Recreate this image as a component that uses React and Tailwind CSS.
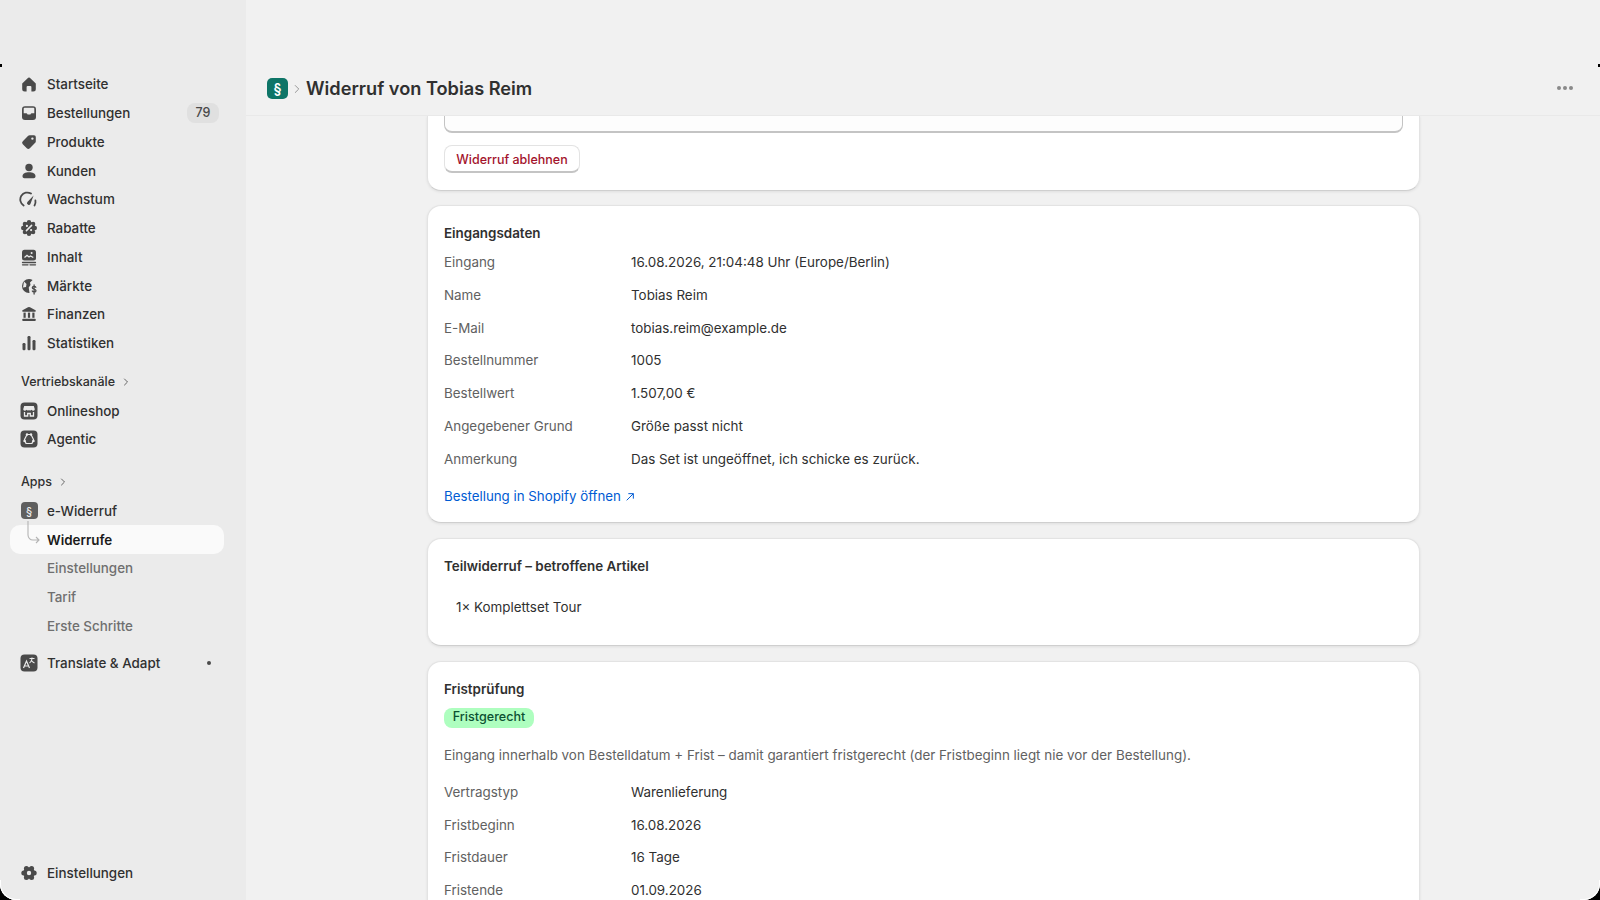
import { ChevronRight } from 'lucide-react'

const DARK = '#4a4a4a'
const SIDE = '#ebebeb'

const Ico = ({ children }) => (
  <svg viewBox="0 0 20 20" className="w-5 h-5 shrink-0" fill={DARK}>{children}</svg>
)

const Lobes = ({ n, r, lobe, core }) => (
  <>
    <circle cx="10" cy="10" r={core} />
    {Array.from({ length: n }).map((_, i) => {
      const a = (i / n) * Math.PI * 2
      return <circle key={i} cx={10 + r * Math.cos(a)} cy={10 + r * Math.sin(a)} r={lobe} />
    })}
  </>
)

const icons = {
  home: (
    <Ico><path d="M3.2 9.6 8.4 4.4a2.2 2.2 0 0 1 3.2 0l5.2 5.2V15a2.5 2.5 0 0 1-2.5 2.5h-1.9V13a1 1 0 0 0-1-1H8.6a1 1 0 0 0-1 1v4.5H5.7A2.5 2.5 0 0 1 3.2 15Z" /></Ico>
  ),
  inbox: (
    <Ico>
      <rect x="3" y="3.2" width="14" height="13.8" rx="3" />
      <path d="M4.7 5.5c0-.5.4-.8.8-.8h9c.4 0 .8.3.8.8v4.7h-2.6c-.5 0-.8.3-1 .7l-.3.6H8.6l-.3-.6c-.2-.4-.5-.7-1-.7H4.7Z" fill={SIDE} />
    </Ico>
  ),
  tag: (
    <Ico>
      <path fillRule="evenodd" d="M10.6 3.2H15a1.8 1.8 0 0 1 1.8 1.8v4.4a2 2 0 0 1-.6 1.4l-5.4 5.4a2.1 2.1 0 0 1-3 0l-4-4a2.1 2.1 0 0 1 0-3l5.4-5.4a2 2 0 0 1 1.4-.6ZM13.4 5.4a1.2 1.2 0 1 0 0 2.4 1.2 1.2 0 0 0 0-2.4Z" />
    </Ico>
  ),
  person: (
    <Ico>
      <circle cx="10" cy="6.5" r="3.7" />
      <path d="M3.5 15.3c0-2.6 2.8-4 6.5-4s6.5 1.4 6.5 4c0 1.2-.8 1.9-1.9 1.9H5.4c-1.1 0-1.9-.7-1.9-1.9Z" />
    </Ico>
  ),
  gauge: (
    <Ico>
      <path d="M4.6 16.5A6.8 6.8 0 0 1 12 4.6" fill="none" stroke={DARK} strokeWidth="1.8" strokeLinecap="round" />
      <path d="M15.5 16.5A6.8 6.8 0 0 0 16.4 11.5" fill="none" stroke={DARK} strokeWidth="1.8" strokeLinecap="round" />
      <path d="M14.6 6.4 11.6 14.6a1.8 1.8 0 1 1-3.2-1.5Z" />
    </Ico>
  ),
  discount: (
    <Ico>
      <Lobes n={8} r={5.8} lobe={2.2} core={6.2} />
      <path d="M12.6 7.4 7.4 12.6" stroke={SIDE} strokeWidth="1.5" strokeLinecap="round" />
      <circle cx="7.9" cy="7.9" r="1.1" fill={SIDE} />
      <circle cx="12.1" cy="12.1" r="1.1" fill={SIDE} />
    </Ico>
  ),
  content: (
    <Ico>
      <rect x="3" y="2.8" width="14" height="10.6" rx="2.5" />
      <path d="M5.5 10.5 8 8.3l2 1.7 1.5-1 2.8 1.5" fill="none" stroke={SIDE} strokeWidth="1.2" />
      <circle cx="12.6" cy="6" r="1" fill={SIDE} />
      <path d="M3.5 15.5h13M3.5 17.8h5.5M11 17.8h5.5" stroke={DARK} strokeWidth="1.3" strokeLinecap="round" />
    </Ico>
  ),
  globe: (
    <Ico>
      <path d="M10 3a7 7 0 0 1 3.6 1L11 6.5 11.5 9l-1.8 2.5.8 5.5H10A7 7 0 0 1 10 3Z" />
      <path d="M5 5.5 7.5 8 7 11l-3 .5Z" fill={SIDE} />
      <path d="M16.8 11.3c-.3-.7-1-1-1.7-1-1 0-1.8.5-1.8 1.4 0 1.9 3.7 1 3.7 3 0 .9-.8 1.4-1.9 1.4-.8 0-1.5-.4-1.8-1.1M15.1 9v9" fill="none" stroke={DARK} strokeWidth="1.3" strokeLinecap="round" />
    </Ico>
  ),
  bank: (
    <Ico>
      <path d="M9 3.3a2 2 0 0 1 2 0l5.5 3c.6.4.4 1.4-.4 1.4H3.9c-.8 0-1-1-.4-1.4Z" />
      <rect x="4.5" y="8.6" width="2.2" height="5.2" />
      <rect x="8.9" y="8.6" width="2.2" height="5.2" />
      <rect x="13.3" y="8.6" width="2.2" height="5.2" />
      <rect x="3.2" y="14.7" width="13.6" height="2.3" rx="1" />
    </Ico>
  ),
  chart: (
    <Ico>
      <rect x="3.5" y="10" width="3" height="7.2" rx="1.2" />
      <rect x="8.5" y="3" width="3" height="14.2" rx="1.2" />
      <rect x="13.5" y="7" width="3" height="10.2" rx="1.2" />
    </Ico>
  ),
  shop: (
    <Ico>
      <rect x="1.5" y="1.5" width="17" height="17" rx="4" />
      <path d="M5.2 5h9.6l1 3.2a1.7 1.7 0 0 1-3.2.6 1.9 1.9 0 0 1-2.6.2 1.9 1.9 0 0 1-2.6-.2 1.7 1.7 0 0 1-3.2-.6Z" fill={SIDE} />
      <path d="M5.5 11v4h3.2v-2.5h2.6V15h3.2v-4" fill="none" stroke={SIDE} strokeWidth="1.3" />
    </Ico>
  ),
  agentic: (
    <Ico>
      <rect x="1.5" y="1.5" width="17" height="17" rx="4" />
      <path d="M8 5.5h4l2.5 5-1.5 4H7l-1.5-4Z" fill="none" stroke={SIDE} strokeWidth="1.2" />
      <circle cx="8" cy="5.5" r="1.2" fill={SIDE} />
      <circle cx="12" cy="5.5" r="1.2" fill={SIDE} />
      <circle cx="5.5" cy="12" r="1.2" fill={SIDE} />
      <circle cx="14.5" cy="12" r="1.2" fill={SIDE} />
    </Ico>
  ),
  para: (
    <span className="w-[17px] h-[17px] mx-[1.5px] shrink-0 rounded-[4px] bg-[#5f5f5f] text-[#ebebeb] text-[11px] font-medium flex items-center justify-center">§</span>
  ),
  translate: (
    <Ico>
      <rect x="1.5" y="1.5" width="17" height="17" rx="4" />
      <path d="M4.5 15 7.5 8l3 7M5.7 13h3.6" fill="none" stroke={SIDE} strokeWidth="1.2" />
      <path d="M10.5 5.5h5M13 4.5v1c0 2-1 3.5-2.5 4.5M12 7c.7 1.3 1.8 2.2 3.5 3" fill="none" stroke={SIDE} strokeWidth="1.1" />
    </Ico>
  ),
  gear: (
    <Ico>
      <Lobes n={6} r={5.2} lobe={2.5} core={5.8} />
      <circle cx="10" cy="10" r="2.2" fill={SIDE} />
    </Ico>
  ),
}

function NavRow({ icon, label, right, className = '' }) {
  return (
    <div className={`h-[28.75px] pl-[19px] pr-[29px] flex items-center gap-[8px] text-[13.4px] font-medium text-[#303030] ${className}`}>
      {icons[icon]}
      <span className="flex-1">{label}</span>
      {right}
    </div>
  )
}

function SubRow({ label, active }) {
  return (
    <div className={`h-[28.75px] flex items-center pl-[47px] text-[13.4px] font-medium ${active ? 'text-[#1a1a1a] font-semibold' : 'text-[#6f6f6f]'}`}>
      {active ? (
        <div className="absolute left-[10px] w-[214px] h-[29px] rounded-[10px] bg-[#fafafa] flex items-center pl-[37px]">{label}</div>
      ) : label}
    </div>
  )
}

function SectionLabel({ label, className = '' }) {
  return (
    <div className={`h-[28.75px] pl-[21px] flex items-center gap-[5px] text-[12.5px] font-medium text-[#303030] ${className}`}>
      {label}
      <ChevronRight size={12} strokeWidth={1.8} className="text-[#555555]" />
    </div>
  )
}

function Sidebar() {
  return (
    <aside className="w-[246px] shrink-0 h-full bg-[#ebebeb] pt-[70px] pb-[13px] flex flex-col">
      <NavRow icon="home" label="Startseite" />
      <NavRow
        icon="inbox"
        label="Bestellungen"
        right={<span className="w-[32px] h-[20px] -mr-[2px] rounded-[8px] bg-[#e0e0e0] text-[12.5px] text-[#4a4a4a] flex items-center justify-center">79</span>}
      />
      <NavRow icon="tag" label="Produkte" />
      <NavRow icon="person" label="Kunden" />
      <NavRow icon="gauge" label="Wachstum" />
      <NavRow icon="discount" label="Rabatte" />
      <NavRow icon="content" label="Inhalt" />
      <NavRow icon="globe" label="Märkte" />
      <NavRow icon="bank" label="Finanzen" />
      <NavRow icon="chart" label="Statistiken" />

      <SectionLabel label="Vertriebskanäle" className="mt-[10px]" />
      <NavRow icon="shop" label="Onlineshop" />
      <NavRow icon="agentic" label="Agentic" />

      <SectionLabel label="Apps" className="mt-[14px]" />
      <NavRow icon="para" label="e-Widerruf" />
      <div className="relative">
        <SubRow label="Widerrufe" active />
        <svg className="absolute left-[26px] -top-[4px] w-[16px] h-[26px]" viewBox="0 0 16 26" fill="none" stroke="#b4b4b4" strokeWidth="1.1">
          <path d="M2 0v14a5 5 0 0 0 5 5h6M10 16l3 3-3 3" />
        </svg>
      </div>
      <SubRow label="Einstellungen" />
      <SubRow label="Tarif" />
      <SubRow label="Erste Schritte" />

      <NavRow
        icon="translate"
        label="Translate & Adapt"
        className="mt-[8px]"
        right={<span className="w-[4px] h-[4px] mr-[6px] rounded-full bg-[#4a4a4a]" />}
      />
      <NavRow icon="gear" label="Einstellungen" className="mt-auto" />
    </aside>
  )
}

function Card({ children, className = '' }) {
  return (
    <section className={`bg-white rounded-[14px] border border-[#e3e3e3] border-b-[#cfcfcf] shadow-[0_1px_3px_rgba(0,0,0,0.08)] px-[16px] ${className}`}>
      {children}
    </section>
  )
}

function Rows({ rows }) {
  return (
    <div className="flex flex-col gap-[12.8px]">
      {rows.map(([k, v]) => (
        <div key={k} className="h-[20px] flex items-center text-[13.4px]">
          <span className="w-[187px] shrink-0 text-[#616161]">{k}</span>
          <span className="text-[#303030]">{v}</span>
        </div>
      ))}
    </div>
  )
}

const CardTitle = ({ children }) => (
  <h2 className="h-[20px] flex items-center text-[13.4px] font-semibold text-[#303030]">{children}</h2>
)

export default function App() {
  return (
    <div className="relative w-[1600px] h-[900px] bg-black overflow-hidden font-['Inter',sans-serif]">
      <div className="w-full h-full flex rounded-b-[16px] overflow-hidden bg-[#f1f1f1]">
        <Sidebar />
        <main className="flex-1 min-w-0 h-full flex flex-col">
          <header className="h-[116px] shrink-0 border-b border-[#e9e9e9] pt-[78px] pl-[21px] pr-[27px] flex items-start">
            <span className="w-[21px] h-[21px] rounded-[5px] bg-[#0e7567] text-white text-[14px] font-semibold flex items-center justify-center">§</span>
            <ChevronRight size={14} strokeWidth={1.5} className="text-[#8a8a8a] ml-[2px] mt-[4px]" />
            <h1 className="ml-[2px] h-[21px] flex items-center text-[18.2px] font-semibold text-[#303030]">Widerruf von Tobias Reim</h1>
            <div className="ml-auto mt-[8px] flex gap-[2px]">
              <span className="w-[4px] h-[4px] rounded-full bg-[#8a8a8a]" />
              <span className="w-[4px] h-[4px] rounded-full bg-[#8a8a8a]" />
              <span className="w-[4px] h-[4px] rounded-full bg-[#8a8a8a]" />
            </div>
          </header>

          <div className="flex-1 min-h-0 overflow-hidden pl-[181px] pr-[180px] flex flex-col">
            <Card className="shrink-0 rounded-t-none border-t-0 pb-[17px]">
              <div className="h-[17px] bg-[#fdfdfd] border border-t-0 border-[#c4c4c4] border-b-2 rounded-b-[8px]" />
              <button className="mt-[12px] h-[28px] w-[136px] pt-[4px] rounded-[8px] bg-white border border-[#e3e3e3] border-b-[#c4c4c4] border-b-2 text-[12.5px] font-medium text-[#a3132c] flex items-center justify-center">
                Widerruf ablehnen
              </button>
            </Card>

            <Card className="shrink-0 mt-[14px] pt-[17px] pb-[15px]">
              <CardTitle>Eingangsdaten</CardTitle>
              <div className="mt-[9px]">
                <Rows rows={[
                  ['Eingang', '16.08.2026, 21:04:48 Uhr (Europe/Berlin)'],
                  ['Name', 'Tobias Reim'],
                  ['E-Mail', 'tobias.reim@example.de'],
                  ['Bestellnummer', '1005'],
                  ['Bestellwert', '1.507,00 €'],
                  ['Angegebener Grund', 'Größe passt nicht'],
                  ['Anmerkung', 'Das Set ist ungeöffnet, ich schicke es zurück.'],
                ]} />
              </div>
              <a className="mt-[18px] h-[20px] flex items-center gap-[4px] text-[13.3px] text-[#005bd3]">
                Bestellung in Shopify öffnen
                <svg viewBox="0 0 12 12" className="w-[10px] h-[10px]" fill="none" stroke="#005bd3" strokeWidth="1.2">
                  <path d="M2 10 10 2M4 2h6v6" />
                </svg>
              </a>
            </Card>

            <Card className="shrink-0 h-[108px] mt-[15px] pt-[17px]">
              <CardTitle>Teilwiderruf – betroffene Artikel</CardTitle>
              <p className="mt-[21px] ml-[12px] h-[20px] flex items-center text-[13.4px] text-[#303030]">1× Komplettset Tour</p>
            </Card>

            <Card className="shrink-0 mt-[15px] pt-[17px] pb-[16px]">
              <CardTitle>Fristprüfung</CardTitle>
              <span className="mt-[9px] w-[90px] h-[20px] rounded-[8px] bg-[#aefebf] text-[12.6px] font-medium text-[#0c5132] flex items-center justify-center">Fristgerecht</span>
              <p className="mt-[17px] h-[20px] flex items-center text-[13.4px] text-[#616161]">
                Eingang innerhalb von Bestelldatum + Frist – damit garantiert fristgerecht (der Fristbeginn liegt nie vor der Bestellung).
              </p>
              <div className="mt-[17px]">
                <Rows rows={[
                  ['Vertragstyp', 'Warenlieferung'],
                  ['Fristbeginn', '16.08.2026'],
                  ['Fristdauer', '16 Tage'],
                  ['Fristende', '01.09.2026'],
                ]} />
              </div>
            </Card>
          </div>
        </main>
      </div>
      {/* Fensterkanten: Reste der Ecken */}
      <div className="absolute left-0 top-[64px] w-[2px] h-[3px] bg-black" />
      <div className="absolute right-0 top-[64px] w-[2px] h-[3px] bg-black" />
      <div className="absolute left-0 bottom-0 w-[20px] h-[20px] rounded-bl-[16px] border-l border-b border-white" />
      <div className="absolute right-0 bottom-0 w-[20px] h-[20px] rounded-br-[16px] border-r border-b border-white" />
    </div>
  )
}
